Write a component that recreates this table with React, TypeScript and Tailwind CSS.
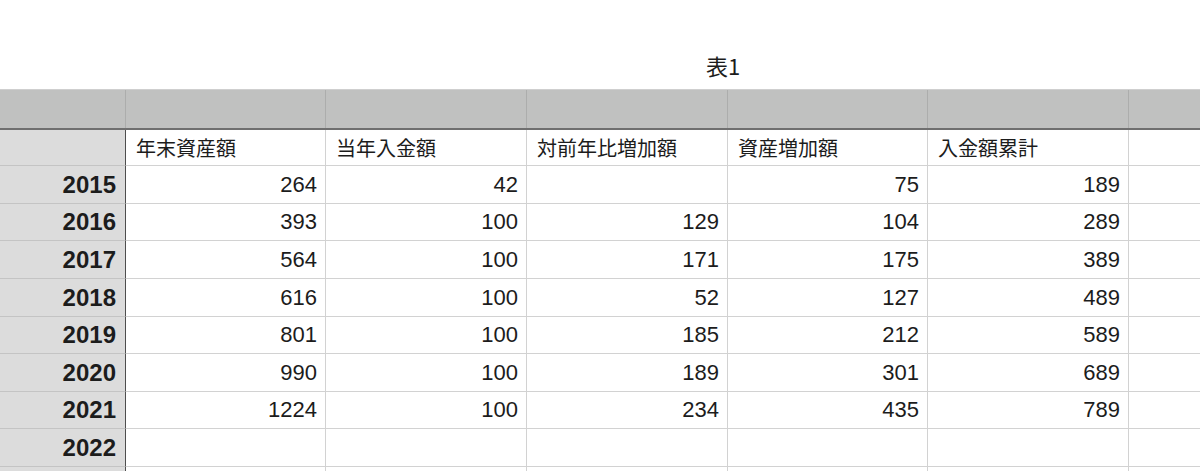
import React from "react";

const headers = ["年末資産額", "当年入金額", "対前年比増加額", "資産増加額", "入金額累計", ""];
const rows: { year: string; vals: string[]; h: string }[] = [
  { year: "2015", vals: ["264", "42", "", "75", "189", ""], h: "h-[38px]" },
  { year: "2016", vals: ["393", "100", "129", "104", "289", ""], h: "h-[37px]" },
  { year: "2017", vals: ["564", "100", "171", "175", "389", ""], h: "h-[38px]" },
  { year: "2018", vals: ["616", "100", "52", "127", "489", ""], h: "h-[38px]" },
  { year: "2019", vals: ["801", "100", "185", "212", "589", ""], h: "h-[37px]" },
  { year: "2020", vals: ["990", "100", "189", "301", "689", ""], h: "h-[38px]" },
  { year: "2021", vals: ["1224", "100", "234", "435", "789", ""], h: "h-[37px]" },
  { year: "2022", vals: ["", "", "", "", "", ""], h: "h-[38px]" },
  { year: "", vals: ["", "", "", "", "", ""], h: "h-[38px]" },
];

const grid = "grid grid-cols-[126px_200px_201px_201px_200px_201px_1fr]";
const jp = "font-['Noto_Sans_CJK_JP',sans-serif]";
const num = "font-['Liberation_Sans','Noto_Sans_CJK_JP',sans-serif]";

export default function App() {
  return (
    <div className={`w-[1200px] h-[471px] overflow-hidden bg-white text-[#1c1c1c] ${jp}`}>
      <div className="h-[89px] pl-[706px] pt-[54px]">
        <div className="text-[22px] leading-none">表1</div>
      </div>
      <div className={`${grid} h-[41px] border-t border-t-[#cfcfcf] border-b-2 border-b-[#6f6f6f] bg-[#c0c1c0]`}>
        {Array.from({ length: 7 }).map((_, i) => (
          <div key={i} className={i < 6 ? "border-r border-r-[#acadac]" : ""} />
        ))}
      </div>
      <div className={`${grid} h-[36px]`}>
        <div className="bg-[#dcdcdc] border-r border-r-[#4e4e4e] border-b border-b-[#c4c4c4]" />
        {headers.map((h, i) => (
          <div
            key={i}
            className={`flex items-center pl-[10px] text-[20px] leading-none border-b border-b-[#d2d2d2] ${i < 5 ? "border-r border-r-[#d2d2d2]" : ""}`}
          >
            {h}
          </div>
        ))}
      </div>
      {rows.map((r, ri) => (
        <div key={ri} className={`${grid} ${r.h}`}>
          <div className={`${num} bg-[#dcdcdc] border-r border-r-[#4e4e4e] border-b border-b-[#c4c4c4] flex items-center justify-end pr-[9px] text-[24px] font-bold leading-none`}>
            {r.year}
          </div>
          {r.vals.map((v, i) => (
            <div
              key={i}
              className={`${num} flex items-center justify-end pr-[8px] text-[22px] leading-none border-b border-b-[#d2d2d2] ${i < 5 ? "border-r border-r-[#d2d2d2]" : ""}`}
            >
              {v}
            </div>
          ))}
        </div>
      ))}
    </div>
  );
}
